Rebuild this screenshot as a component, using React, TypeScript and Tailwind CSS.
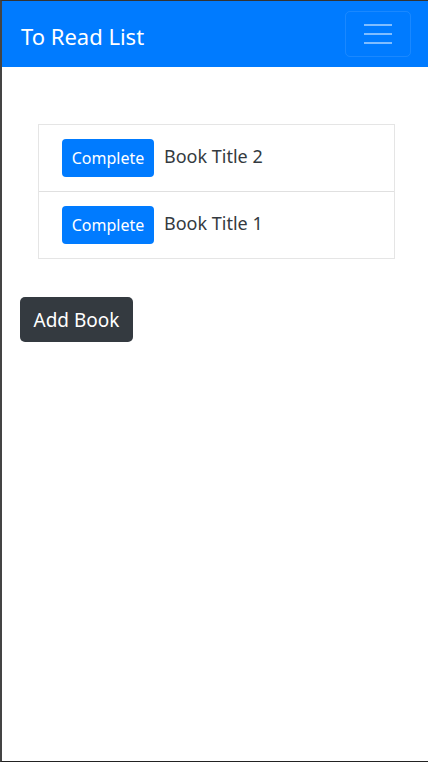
import React from "react";

export default function App() {
  const books = ["Book Title 2", "Book Title 1"];
  return (
    <div
      className="h-[762px] w-[428px] box-border border-t border-b border-l-2 border-t-[#333] border-b-[#222] border-l-[#444] bg-white flex flex-col"
      style={{ fontFamily: '"Noto Sans", "Open Sans", sans-serif' }}
    >
      <nav className="h-[66px] bg-[#007bff] flex items-center justify-between pl-[19px] pr-[17px]">
        <span className="text-white text-[22px] leading-none mt-[3px]">To Read List</span>
        <button className="w-[66px] h-[46px] border border-white/10 rounded-[5px] flex flex-col items-center justify-center gap-[7px]">
          <span className="block w-[28px] h-[2px] bg-white/50" />
          <span className="block w-[28px] h-[2px] bg-white/50" />
          <span className="block w-[28px] h-[2px] bg-white/50" />
        </button>
      </nav>
      <div className="pt-[57px] pl-[36px] pr-[33px]">
        <ul className="border border-[#e5e5e5]">
          {books.map((b, i) => (
            <li
              key={b}
              className={`h-[66px] flex items-center pl-[23px] ${i > 0 ? "border-t border-[#e0e0e0] h-[67px]" : ""}`}
            >
              <button className="h-[38px] w-[92px] bg-[#007bff] text-white text-[16px] rounded-[4px] flex items-center justify-center">
                Complete
              </button>
              <span className="ml-[10px] text-[18px] text-[#343a40] -mt-[4px]">{b}</span>
            </li>
          ))}
        </ul>
      </div>
      <div className="pt-[38px] pl-[18px]">
        <button className="h-[45px] w-[113px] bg-[#343a40] text-white text-[19px] rounded-[5px] flex items-center justify-center">
          <span className="mt-[2px]">Add Book</span>
        </button>
      </div>
    </div>
  );
}
